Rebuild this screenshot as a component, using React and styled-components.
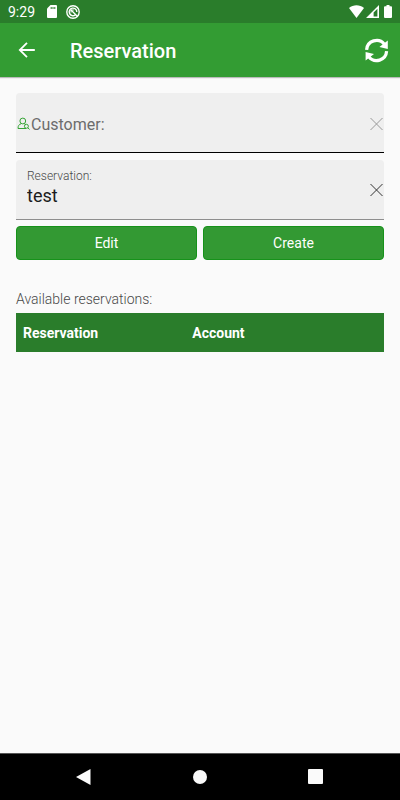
import React, { useState } from "react";
import styled, { createGlobalStyle } from "styled-components";

const GlobalStyle = createGlobalStyle`
  * { box-sizing: border-box; }
  body {
    margin: 0;
    background: #fafafa;
    font-family: Roboto, "Liberation Sans", sans-serif;
  }
  button, input { font: inherit; }
`;

const Screen = styled.div`
  display: flex;
  flex-direction: column;
  min-height: 100vh;
`;

const StatusBar = styled.div`
  display: flex;
  align-items: center;
  height: 23px;
  padding: 0 8px;
  background: #2a7d2b;
  color: #fff;
  font-size: 14px;
  line-height: 24px;
`;

const StatusIcons = styled.div`
  display: flex;
  align-items: center;
  gap: ${(p) => p.$gap}px;
  margin-left: ${(p) => (p.$end ? "auto" : "12px")};
`;

const AppBar = styled.header`
  display: flex;
  align-items: center;
  height: 54px;
  padding: 0 10px 0 14px;
  background: #339c33;
  color: #fff;
  box-shadow: 0 1px 1px rgba(0, 0, 0, 0.25);
`;

const Title = styled.h1`
  flex: 1;
  margin: 0 0 0 30px;
  padding-top: 2px;
  font-size: 20px;
  font-weight: 500;
  line-height: 24px;
`;

const IconButton = styled.button`
  display: flex;
  padding: 0;
  border: 0;
  background: none;
  color: inherit;
  cursor: pointer;
`;

const Content = styled.main`
  flex: 1;
  padding: 16px;
`;

const Form = styled.form`
  display: grid;
  gap: 6px;
`;

const Fields = styled.div`
  display: grid;
  gap: 7px;
`;

const Field = styled.div`
  display: flex;
  align-items: center;
  height: 60px;
  padding-left: ${(p) => (p.$inset ? "11px" : "0")};
  padding-top: ${(p) => (p.$inset ? "0" : "2px")};
  border-bottom: 1px solid ${(p) => (p.$active ? "#000" : "#8e8e8e")};
  border-radius: 4px 4px 0 0;
  background: #efefef;
`;

const FieldBody = styled.div`
  display: flex;
  flex: 1;
  flex-direction: ${(p) => (p.$stacked ? "column" : "row")};
  min-width: 0;
  padding-bottom: ${(p) => (p.$stacked ? "4px" : "0")};
`;

const FieldLabel = styled.label`
  padding-top: ${(p) => (p.$small ? "0" : "2px")};
  color: ${(p) => (p.$small ? "#484848" : "#6c6c6c")};
  font-size: ${(p) => (p.$small ? "12px" : "16px")};
  font-weight: ${(p) => (p.$small ? 300 : 400)};
  line-height: ${(p) => (p.$small ? "16px" : "24px")};
`;

const FieldInput = styled.input`
  flex: 1 1 auto;
  width: 100%;
  min-width: 0;
  padding: 0;
  border: 0;
  outline: 0;
  background: transparent;
  color: #1c1c1c;
  font-size: 18px;
  line-height: 24px;
`;

const Actions = styled.div`
  display: grid;
  grid-template-columns: 1fr 1fr;
  gap: 6px;
`;

const ActionButton = styled.button`
  height: 34px;
  padding: 0;
  border: 1px solid #16921a;
  border-radius: 4px;
  background: #339933;
  color: #fff;
  font-size: 14px;
  cursor: pointer;
`;

const Table = styled.table`
  width: 100%;
  margin-top: 30px;
  border-collapse: collapse;
  table-layout: fixed;
`;

const Caption = styled.caption`
  padding-bottom: 5px;
  color: #484848;
  font-size: 14px;
  font-weight: 300;
  line-height: 18px;
  text-align: left;
`;

const HeadCell = styled.th`
  width: ${(p) => p.$width};
  height: 39px;
  padding: 0 7px;
  background: #2a7d2b;
  color: #fff;
  font-size: 14px;
  font-weight: 700;
  text-align: left;
`;

const NavBar = styled.nav`
  display: flex;
  justify-content: center;
  gap: 92px;
  align-items: center;
  height: 47px;
  border-top: 1px solid #555;
  background: #000;
  color: #fafafa;
`;

const SdIcon = () => (
  <svg width="10" height="13" viewBox="0 0 10 13" aria-hidden="true">
    <path fill="#fff" d="M3.5 0H9a1 1 0 0 1 1 1v11a1 1 0 0 1-1 1H1a1 1 0 0 1-1-1V3.5z" />
    <path stroke="#2a7d2b" d="M4.2 2v2M6 2v2M7.8 2v2" />
  </svg>
);

const SyncOffIcon = () => (
  <svg width="14" height="14" viewBox="0 0 14 14" fill="none" stroke="#fff" aria-hidden="true">
    <circle cx="7" cy="7" r="6.2" strokeWidth="1.4" />
    <path strokeWidth="1.4" d="M9.2 10A3.8 3.8 0 1 1 10.8 7M5 5l6.5 6.5" />
    <path strokeWidth="1" d="M5 7.6V5h2.8" />
  </svg>
);

const WifiIcon = () => (
  <svg width="15" height="13" viewBox="0 0 15 13" aria-hidden="true">
    <path fill="#fff" d="M0 3C4.2-.8 10.8-.8 15 3L7.5 13z" />
  </svg>
);

const SignalIcon = () => (
  <svg width="13" height="13" viewBox="0 0 13 13" aria-hidden="true">
    <path fill="#fff" fillRule="evenodd" d="M0 13L13 0V13zM7.6 7.4V11.4H11.4V3.7z" />
  </svg>
);

const BatteryIcon = () => (
  <svg width="8" height="13" viewBox="0 0 8 13" aria-hidden="true">
    <path fill="#fff" d="M2.5 0h3v1.3H7a1 1 0 0 1 1 1V12a1 1 0 0 1-1 1H1a1 1 0 0 1-1-1V2.3a1 1 0 0 1 1-1h1.5z" />
  </svg>
);

const BackIcon = () => (
  <svg width="26" height="26" viewBox="0 0 26 26" fill="none" stroke="currentColor" strokeWidth="1.8" aria-hidden="true">
    <path d="M20.8 13H6M13 5.8L5.8 13l7.2 7.2" />
  </svg>
);

const RefreshIcon = () => (
  <svg width="26" height="26" viewBox="0 0 26 26" aria-hidden="true">
    <g fill="none" stroke="currentColor" strokeWidth="3.2">
      <path d="M2.6 12.8A10 10 0 0 1 20.4 7.2" />
      <path d="M22.6 14.2A10 10 0 0 1 4.8 19.8" />
    </g>
    <path fill="currentColor" d="M23.8 3.4v8.6l-8.4-2zM1.6 23.6v-8.6l8.4 2z" />
  </svg>
);

const CustomerIcon = () => (
  <svg width="15" height="14" viewBox="0 0 15 14" fill="none" stroke="#35a535" aria-hidden="true">
    <circle cx="6.8" cy="4" r="2.9" />
    <path d="M5 6.8C3.1 7.4 2 8.6 2 11.5h8M8.3 6.8l1.4.6" />
    <circle cx="10.4" cy="9.3" r="2" />
    <path d="M11.8 10.7l1.7 1.8" />
  </svg>
);

const ClearIcon = ({ color }) => (
  <svg width="15" height="14" viewBox="0 0 15 14" fill="none" stroke={color} aria-hidden="true">
    <path d="M1.5 1l12 12M13.5 1l-12 12" />
  </svg>
);

export default function App() {
  const [customer, setCustomer] = useState("");
  const [reservation, setReservation] = useState("test");

  return (
    <Screen>
      <GlobalStyle />
      <StatusBar>
        <span>9:29</span>
        <StatusIcons $gap={9}>
          <SdIcon />
          <SyncOffIcon />
        </StatusIcons>
        <StatusIcons $end $gap={5}>
          <StatusIcons $gap={2}>
            <WifiIcon />
            <SignalIcon />
          </StatusIcons>
          <BatteryIcon />
        </StatusIcons>
      </StatusBar>
      <AppBar>
        <IconButton type="button" aria-label="Back"><BackIcon /></IconButton>
        <Title>Reservation</Title>
        <IconButton type="button" aria-label="Refresh"><RefreshIcon /></IconButton>
      </AppBar>
      <Content>
        <Form onSubmit={(e) => e.preventDefault()}>
          <Fields>
            <Field $active>
              <CustomerIcon />
              <FieldBody>
                <FieldLabel htmlFor="customer">Customer:</FieldLabel>
                <FieldInput id="customer" value={customer} onChange={(e) => setCustomer(e.target.value)} />
              </FieldBody>
              <IconButton type="button" aria-label="Clear customer" onClick={() => setCustomer("")}>
                <ClearIcon color="#999" />
              </IconButton>
            </Field>
            <Field $inset>
              <FieldBody $stacked>
                <FieldLabel $small htmlFor="reservation">Reservation:</FieldLabel>
                <FieldInput id="reservation" value={reservation} onChange={(e) => setReservation(e.target.value)} />
              </FieldBody>
              <IconButton type="button" aria-label="Clear reservation" onClick={() => setReservation("")}>
                <ClearIcon color="#333" />
              </IconButton>
            </Field>
          </Fields>
          <Actions>
            <ActionButton type="button">Edit</ActionButton>
            <ActionButton type="submit">Create</ActionButton>
          </Actions>
        </Form>
        <Table>
          <Caption>Available reservations:</Caption>
          <thead>
            <tr>
              <HeadCell scope="col" $width="46%">Reservation</HeadCell>
              <HeadCell scope="col" $width="54%">Account</HeadCell>
            </tr>
          </thead>
        </Table>
      </Content>
      <NavBar>
        <IconButton type="button" aria-label="System back">
          <svg width="24" height="24" viewBox="0 0 24 24"><path fill="currentColor" d="M4 12L18.5 4v16z" /></svg>
        </IconButton>
        <IconButton type="button" aria-label="Home">
          <svg width="24" height="24" viewBox="0 0 24 24"><circle cx="12" cy="12" r="7" fill="currentColor" /></svg>
        </IconButton>
        <IconButton type="button" aria-label="Recent apps">
          <svg width="24" height="24" viewBox="0 0 24 24"><rect x="4" y="4" width="15" height="15" rx="1" fill="currentColor" /></svg>
        </IconButton>
      </NavBar>
    </Screen>
  );
}
